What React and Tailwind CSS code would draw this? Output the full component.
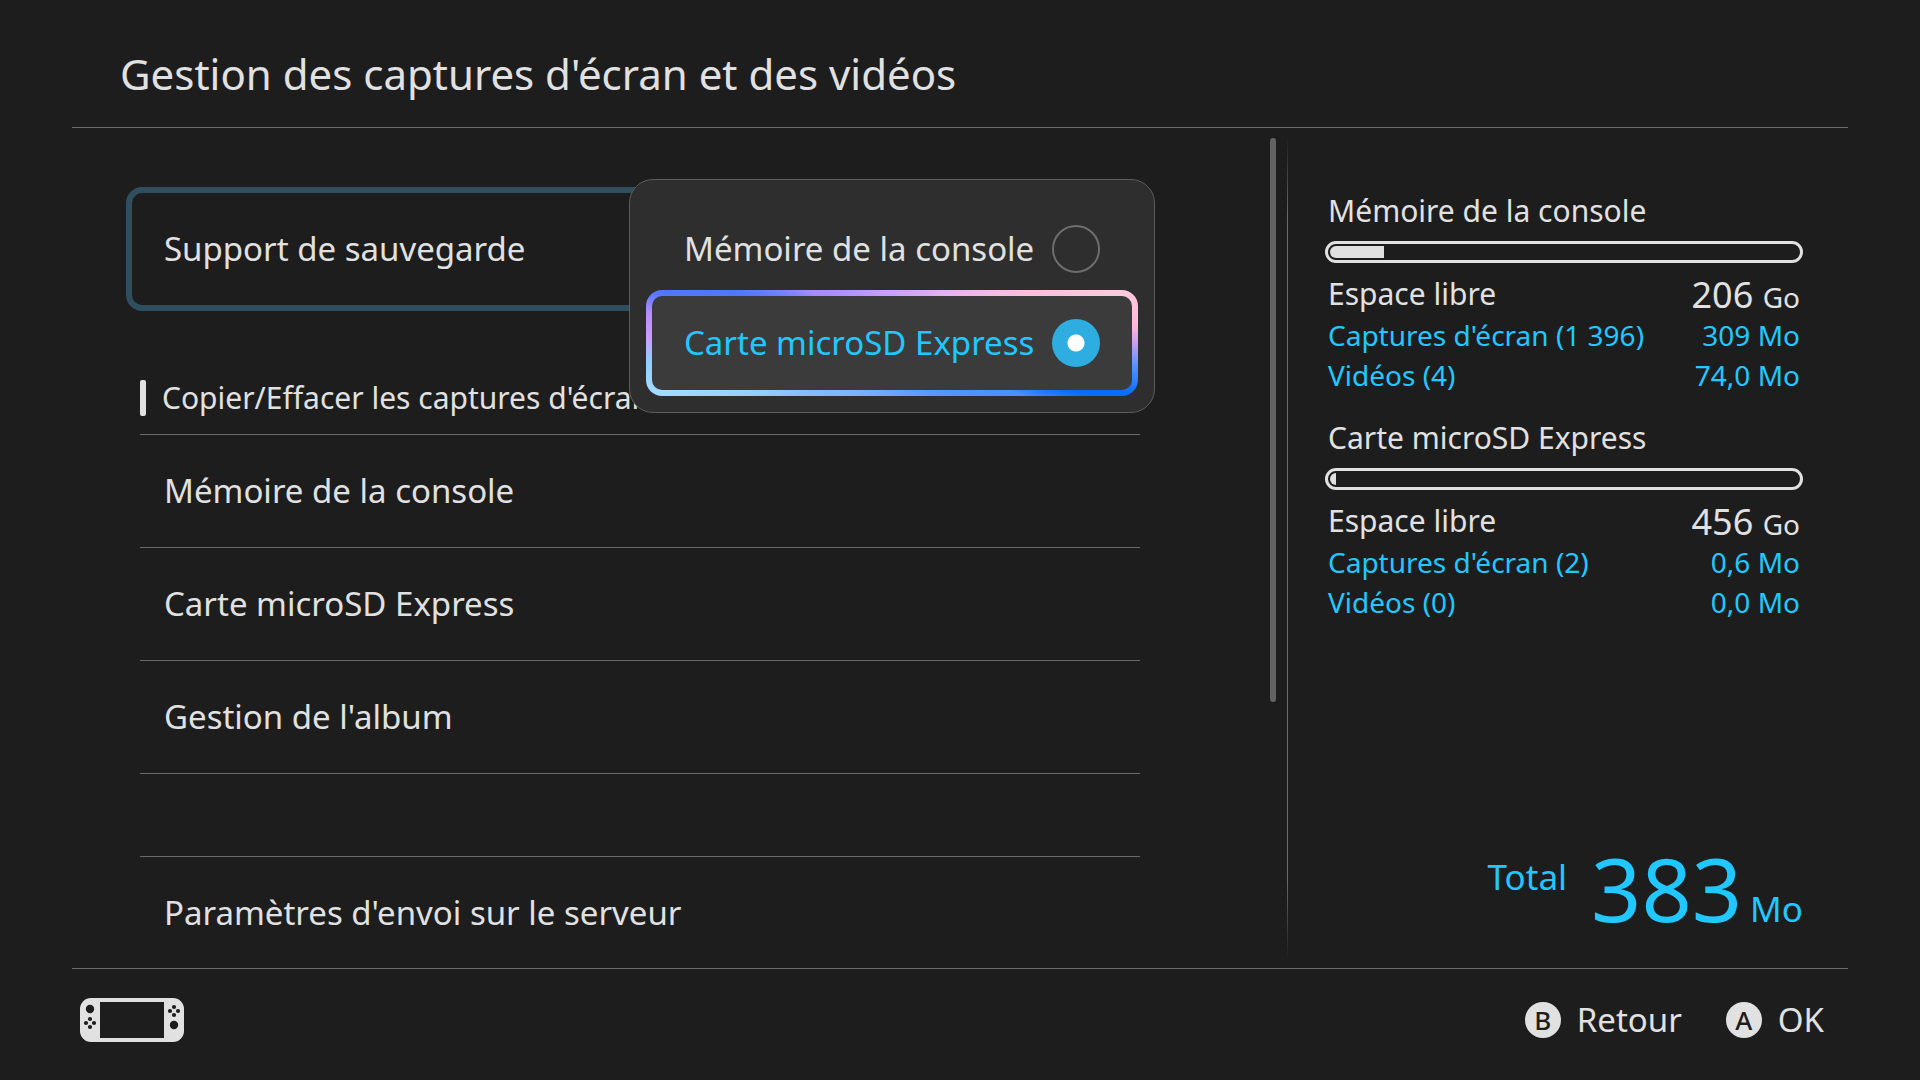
import React, { useState } from "react";

const MEDIA = [
  { id: "console", label: "Mémoire de la console" },
  { id: "microsd", label: "Carte microSD Express" },
];

const MENU_ITEMS = [
  "Mémoire de la console",
  "Carte microSD Express",
  "Gestion de l'album",
];

const STORAGES = [
  {
    name: "Mémoire de la console",
    used: 11.6,
    free: "206",
    shots: { label: "Captures d'écran (1 396)", size: "309 Mo" },
    videos: { label: "Vidéos (4)", size: "74,0 Mo" },
  },
  {
    name: "Carte microSD Express",
    used: 1.2,
    free: "456",
    shots: { label: "Captures d'écran (2)", size: "0,6 Mo" },
    videos: { label: "Vidéos (0)", size: "0,0 Mo" },
  },
];

const ConsoleIcon = () => (
  <svg width="104" height="44" viewBox="0 0 104 44" aria-hidden="true">
    <rect width="104" height="44" rx="11" fill="#e1e1e1" />
    <g fill="#1d1d1d">
      <rect x="20" y="4" width="64" height="36" />
      <circle cx="10" cy="11" r="4.2" />
      <circle cx="10" cy="21" r="2.1" />
      <circle cx="6" cy="25" r="2.1" />
      <circle cx="14" cy="25" r="2.1" />
      <circle cx="10" cy="29" r="2.1" />
      <circle cx="94" cy="9" r="2.1" />
      <circle cx="90" cy="13" r="2.1" />
      <circle cx="98" cy="13" r="2.1" />
      <circle cx="94" cy="17" r="2.1" />
      <circle cx="94" cy="27" r="4.2" />
    </g>
  </svg>
);

const MediaOption = ({ option, checked, onSelect }) => (
  <label
    className={`flex h-[106px] cursor-pointer items-center justify-between rounded-[16px] border-[6px] border-transparent px-8 text-[33px] leading-10 ${
      checked
        ? "text-[#20c8ff] [background:linear-gradient(#3b3b3b,#3b3b3b)_padding-box,conic-gradient(#c9a0ff_0deg,#dcaaf8_37deg,#f2b8ec_60deg,#ffbedc_70deg,#ffcadd_78deg,#ffb8dc_86deg,#c8a0f0_90deg,#5a94ff_95deg,#0a6cfa_102deg,#0a6cfa_105deg,#4a90ff_112deg,#6ba4ff_180deg,#84bcff_240deg,#96d2ff_252deg,#a2dcff_258deg,#92ccff_266deg,#cc9cff_271deg,#b88cff_277deg,#4f78ff_282deg,#4a7aff_288deg,#a48cfc_302deg,#c9a0ff_350deg)_border-box]"
        : "text-[#e1e1e1]"
    }`}
  >
    {option.label}
    <input
      type="radio"
      name="media"
      checked={checked}
      onChange={() => onSelect(option.id)}
      className="size-12 shrink-0 appearance-none rounded-full border-2 border-[#6e6e6e] checked:border-0 checked:bg-[radial-gradient(circle,#fff_8px,#2eaee0_9px)]"
    />
  </label>
);

const Storage = ({ storage }) => (
  <section>
    <h2 className="pl-[3px] text-[30px] leading-10">{storage.name}</h2>
    <div className="mt-[10px] h-[22px] rounded-full border-[3px] border-[#e1e1e1] p-[2px]">
      <div className="h-full overflow-hidden rounded-full">
        <div className="h-full bg-[#e1e1e1]" style={{ width: `${storage.used}%` }} />
      </div>
    </div>
    <div className="mt-[10px] px-[3px] text-[28px] leading-10">
      <p className="flex h-[42px] items-center justify-between text-[30px]">
        Espace libre
        <span className="pt-1 text-[36px]">
          {storage.free} <span className="text-[28px]">Go</span>
        </span>
      </p>
      <p className="flex justify-between text-[#20c8ff]">
        {storage.shots.label} <span>{storage.shots.size}</span>
      </p>
      <p className="flex justify-between text-[#20c8ff]">
        {storage.videos.label} <span>{storage.videos.size}</span>
      </p>
    </div>
  </section>
);

const FooterButton = ({ letter, label }) => (
  <button className="flex cursor-pointer items-center gap-4 text-[33px] leading-10">
    <span className="flex size-9 items-center justify-center rounded-full bg-[#e1e1e1] text-[26px] leading-9 font-medium text-[#1d1d1d]">
      {letter}
    </span>
    {label}
  </button>
);

const App = () => {
  const [media, setMedia] = useState("microsd");

  return (
    <div className="flex h-screen flex-col overflow-hidden bg-[#1d1d1d] px-[72px] font-['Noto_Sans','Open_Sans',sans-serif] text-[#e1e1e1]">
      {/* Titre */}
      <header className="flex h-32 shrink-0 items-center border-b border-[#6b6b6b] pt-5 pl-12">
        <h1 className="text-[42px] leading-[56px]">
          Gestion des captures d'écran et des vidéos
        </h1>
      </header>

      <main className="flex min-h-0 flex-1">
        {/* Liste des réglages */}
        <div className="min-w-0 flex-1 overflow-hidden pt-[59px] pr-[116px] pl-[54px]">
          <div className="relative">
            <button className="h-[124px] w-full rounded-[16px] border-[6px] border-[#2f4f5f] pl-8 text-left text-[33px] leading-10">
              Support de sauvegarde
            </button>

            <div className="absolute -top-2 -right-px w-[526px] rounded-[24px] border border-[#5c5c5c] bg-[#2e2e2e] p-4">
              <div className="-mb-3">
                <MediaOption
                  option={MEDIA[0]}
                  checked={media === MEDIA[0].id}
                  onSelect={setMedia}
                />
              </div>
              <MediaOption
                option={MEDIA[1]}
                checked={media === MEDIA[1].id}
                onSelect={setMedia}
              />
            </div>
          </div>

          <div className="px-[14px]">
            <h2 className="flex h-[124px] items-end border-b border-[#6b6b6b] pb-4.5">
              <span className="h-9 w-[6px] rounded-[2px] bg-[#e1e1e1]" />
              <span className="pl-4 text-[30px] leading-9">
                Copier/Effacer les captures d'écran
              </span>
            </h2>
            {MENU_ITEMS.map((item) => (
              <button
                key={item}
                className="block h-[113px] w-full border-b border-[#6b6b6b] pl-6 text-left text-[33px] leading-10"
              >
                {item}
              </button>
            ))}
            <div className="h-[83px] border-b border-[#6b6b6b]" />
            <button className="block h-[111px] w-full pl-6 text-left text-[33px] leading-10">
              Paramètres d'envoi sur le serveur
            </button>
          </div>
        </div>

        {/* Barre de défilement */}
        <div className="w-[17px] shrink-0 pt-[10px]">
          <div className="h-[68%] w-[6px] rounded-full bg-[#636363]" />
        </div>
        <div className="my-2 w-px shrink-0 bg-[linear-gradient(transparent,#6b6b6b_10%,#6b6b6b_90%,transparent)]" />

        {/* Espace de stockage */}
        <aside className="flex w-[560px] shrink-0 flex-col gap-[23px] pt-[63px] pr-[45px] pb-9 pl-[37px]">
          {STORAGES.map((storage) => (
            <Storage key={storage.name} storage={storage} />
          ))}
          <p className="mt-auto flex items-baseline justify-end leading-[88px] text-[#20c8ff]">
            <span className="-translate-y-8 text-[35px] leading-10">Total</span>
            <span className="ml-6 text-[88px]">383</span>
            <span className="ml-2 text-[35px] leading-10">Mo</span>
          </p>
        </aside>
      </main>

      {/* Commandes */}
      <footer className="flex h-28 shrink-0 items-center justify-between border-t border-[#6b6b6b] pr-6 pb-2.5 pl-2">
        <ConsoleIcon />
        <div className="flex gap-11">
          <FooterButton letter="B" label="Retour" />
          <FooterButton letter="A" label="OK" />
        </div>
      </footer>
    </div>
  );
};

export default App;
